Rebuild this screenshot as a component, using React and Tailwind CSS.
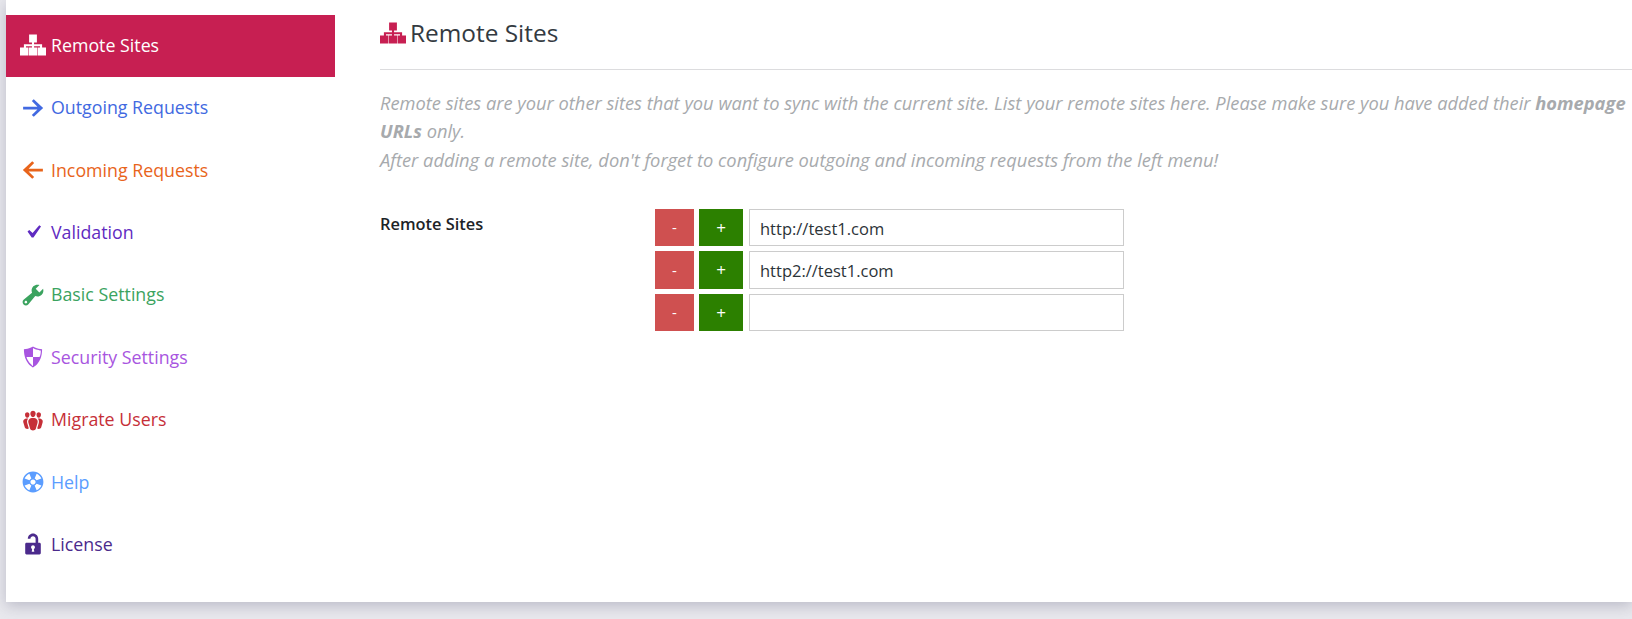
const FONT = "font-['Open_Sans','Noto_Sans',sans-serif]";

const ICONS = {
  networking:
    'M7 2h6v6H7zM9.2 8h1.6v1.4H17V12h-1.6v-1H10.8v1H9.2v-1H4.6v1H3V9.4h6.2zM0 12h6.4v6H0zM6.8 12h6.4v6H6.8zM13.6 12H20v6h-6.4z',
  right: 'M10.6 3.2l7.2 6.8-7.2 6.8-1.5-1.5 4.3-4.1H2.4V9h11L9.1 4.7z',
  left: 'M9.4 3.2L2.2 10l7.2 6.8 1.5-1.5-4.3-4.1h11V9h-11l4.3-4.3z',
  yes: 'M14.83 4.89l1.34.94-5.81 8.38H9.02L5.78 9.67l1.34-1.25 2.57 2.4z',
  tools:
    'M16.68 9.77c-1.34 1.34-3.3 1.67-4.95.99l-5.41 6.52c-.99.99-2.59.99-3.58 0s-.99-2.59 0-3.57l6.52-5.42c-.68-1.65-.35-3.61.99-4.95 1.28-1.28 3.12-1.62 4.72-1.06l-2.89 2.89 2.82 2.82 2.86-2.87c.53 1.58.18 3.39-1.08 4.67zM3.81 16.21c.4.39 1.04.39 1.43 0 .4-.4.4-1.04 0-1.43-.39-.4-1.03-.4-1.43 0-.39.39-.39 1.03 0 1.43z',
  shield: 'M10 2s3 2 7 2c0 11-7 14-7 14S3 15 3 4c4 0 7-2 7-2zm0 8h5s1-1 1-5c0 0-5-1-6-2v7H5c1 4 5 7 5 7v-7z',
  groups:
    'M8.03 4.46c-.29 1.28.55 3.46 1.97 3.46 1.41 0 2.25-2.18 1.96-3.46-.22-.98-1.08-1.63-1.96-1.63-.89 0-1.74.65-1.97 1.63zm-4.13.9c-.25 1.08.47 2.93 1.67 2.93s1.92-1.85 1.67-2.93c-.19-.83-.92-1.39-1.67-1.39s-1.48.56-1.67 1.39zm8.86 0c-.25 1.08.47 2.93 1.66 2.93 1.2 0 1.92-1.85 1.67-2.93-.19-.83-.92-1.39-1.67-1.39-.74 0-1.47.56-1.66 1.39zm-.59 11.43l1.25-4.3C14.2 10 12.71 8.47 10 8.47c-2.72 0-4.21 1.53-3.44 4.02l1.26 4.3C8.05 17.51 9 18 10 18c.98 0 1.94-.49 2.17-1.21zm-6.1-7.63c-.49.67-.96 1.83-.42 3.59l1.12 3.79c-.34.2-.77.31-1.2.31-.85 0-1.65-.41-1.85-1.03l-1.07-3.65c-.65-2.11.61-3.4 2.92-3.4.27 0 .54.02.79.06-.1.1-.2.22-.29.33zm8.35-.39c2.31 0 3.58 1.29 2.92 3.4l-1.07 3.65c-.2.62-1 1.03-1.85 1.03-.43 0-.86-.11-1.2-.31l1.11-3.77c.55-1.78.08-2.94-.42-3.61-.08-.11-.18-.23-.28-.33.25-.04.51-.06.79-.06z',
  sos:
    'M18 10c0-4.42-3.58-8-8-8s-8 3.58-8 8 3.58 8 8 8 8-3.58 8-8zM7.23 3.57L8.72 7.3c-.62.29-1.13.8-1.42 1.42L3.57 7.23c.71-1.64 2.02-2.95 3.66-3.66zm9.2 3.66L12.7 8.72c-.29-.62-.8-1.13-1.42-1.42l1.49-3.73c1.64.71 2.95 2.02 3.66 3.66zM10 12c-1.1 0-2-.9-2-2s.9-2 2-2 2 .9 2 2-.9 2-2 2zm-6.43.77l3.73-1.49c.29.62.8 1.13 1.42 1.42l-1.49 3.73c-1.64-.71-2.95-2.02-3.66-3.66zm9.2 3.66l-1.49-3.73c.62-.29 1.13-.8 1.42-1.42l3.73 1.49c-.71 1.64-2.02 2.95-3.66 3.66z',
  unlock:
    'M12 9V6c0-1.1-.9-2-2-2s-2 .9-2 2H6c0-2.21 1.79-4 4-4s4 1.79 4 4v3h1c.55 0 1 .45 1 1v7c0 .55-.45 1-1 1H5c-.55 0-1-.45-1-1v-7c0-.55.45-1 1-1h7zm-1 7l-.36-2.15c.51-.24.86-.75.86-1.35 0-.83-.67-1.5-1.5-1.5s-1.5.67-1.5 1.5c0 .6.35 1.11.86 1.35L9 16h2z',
};

const MENU = [
  { label: 'Remote Sites', icon: 'networking', active: true, color: 'text-white' },
  { label: 'Outgoing Requests', icon: 'right', color: 'text-[#4169e1]' },
  { label: 'Incoming Requests', icon: 'left', color: 'text-[#e8641b]' },
  { label: 'Validation', icon: 'yes', color: 'text-[#5f2bc1]' },
  { label: 'Basic Settings', icon: 'tools', color: 'text-[#3ba35f]' },
  { label: 'Security Settings', icon: 'shield', color: 'text-[#a855e0]' },
  { label: 'Migrate Users', icon: 'groups', color: 'text-[#c62f38]' },
  { label: 'Help', icon: 'sos', color: 'text-[#5b9dff]' },
  { label: 'License', icon: 'unlock', color: 'text-[#4b2a8c]' },
];

const SITES = ['http://test1.com', 'http2://test1.com', ''];

function Icon({ name, className }) {
  return (
    <svg viewBox="0 0 20 20" fill="currentColor" className={className}>
      <path fillRule="evenodd" d={ICONS[name]} />
    </svg>
  );
}

export default function App() {
  return (
    <div className={`h-[619px] overflow-hidden bg-[#e9e9ee] pl-[6px] ${FONT}`}>
      <div className="flex h-[602px] bg-white shadow-[0_4px_14px_rgba(80,80,110,0.3)]">
        {/* sidebar */}
        <nav className="w-[329px] shrink-0 pt-[15px]">
          {MENU.map(({ label, icon, active, color }) => (
            <a
              key={label}
              className={`flex h-[62.4px] items-center gap-[5px] pl-[14px] pb-[2px] text-[17.8px] ${color} ${active ? 'bg-[#c71f52]' : ''}`}
            >
              <Icon name={icon} className="h-[26px] w-[26px]" />
              {label}
            </a>
          ))}
        </nav>

        {/* main */}
        <main className="min-w-0 flex-1 pl-[45px]">
          <div className="flex h-[70px] items-center gap-[4px] border-b border-[#dcdcde] pb-[3px] text-[24.4px] text-[#333a41]">
            <Icon name="networking" className="h-[26px] w-[26px] text-[#c71f52]" />
            Remote Sites
          </div>

          <div className="mt-[19px] text-[18.3px] italic leading-[28.3px] text-[#a7aaad]">
            <p>
              Remote sites are your other sites that you want to sync with the current site. List your remote sites here. Please make sure you have added their <b>homepage</b>
            </p>
            <p>
              <b>URLs</b> only.
            </p>
            <p>After adding a remote site, don't forget to configure outgoing and incoming requests from the left menu!</p>
          </div>

          <div className="mt-[35px] flex">
            <label className="w-[275px] pt-[3px] text-[16.4px] font-semibold text-[#1d2327]">Remote Sites</label>
            <div className="flex flex-col gap-[5px]">
              {SITES.map((site, i) => (
                <div key={i} className="flex h-[37.5px] gap-[5px]">
                  <button className="w-[39px] bg-[#cf5050] text-[15px] text-white">-</button>
                  <button className="w-[44px] bg-[#2c8000] text-[17px] text-white">+</button>
                  <input
                    readOnly
                    value={site}
                    className="ml-px w-[375px] border border-[#cccccc] px-[10px] pt-[3px] text-[16.5px] text-[#2c3338] outline-none"
                  />
                </div>
              ))}
            </div>
          </div>
        </main>
      </div>
    </div>
  );
}
